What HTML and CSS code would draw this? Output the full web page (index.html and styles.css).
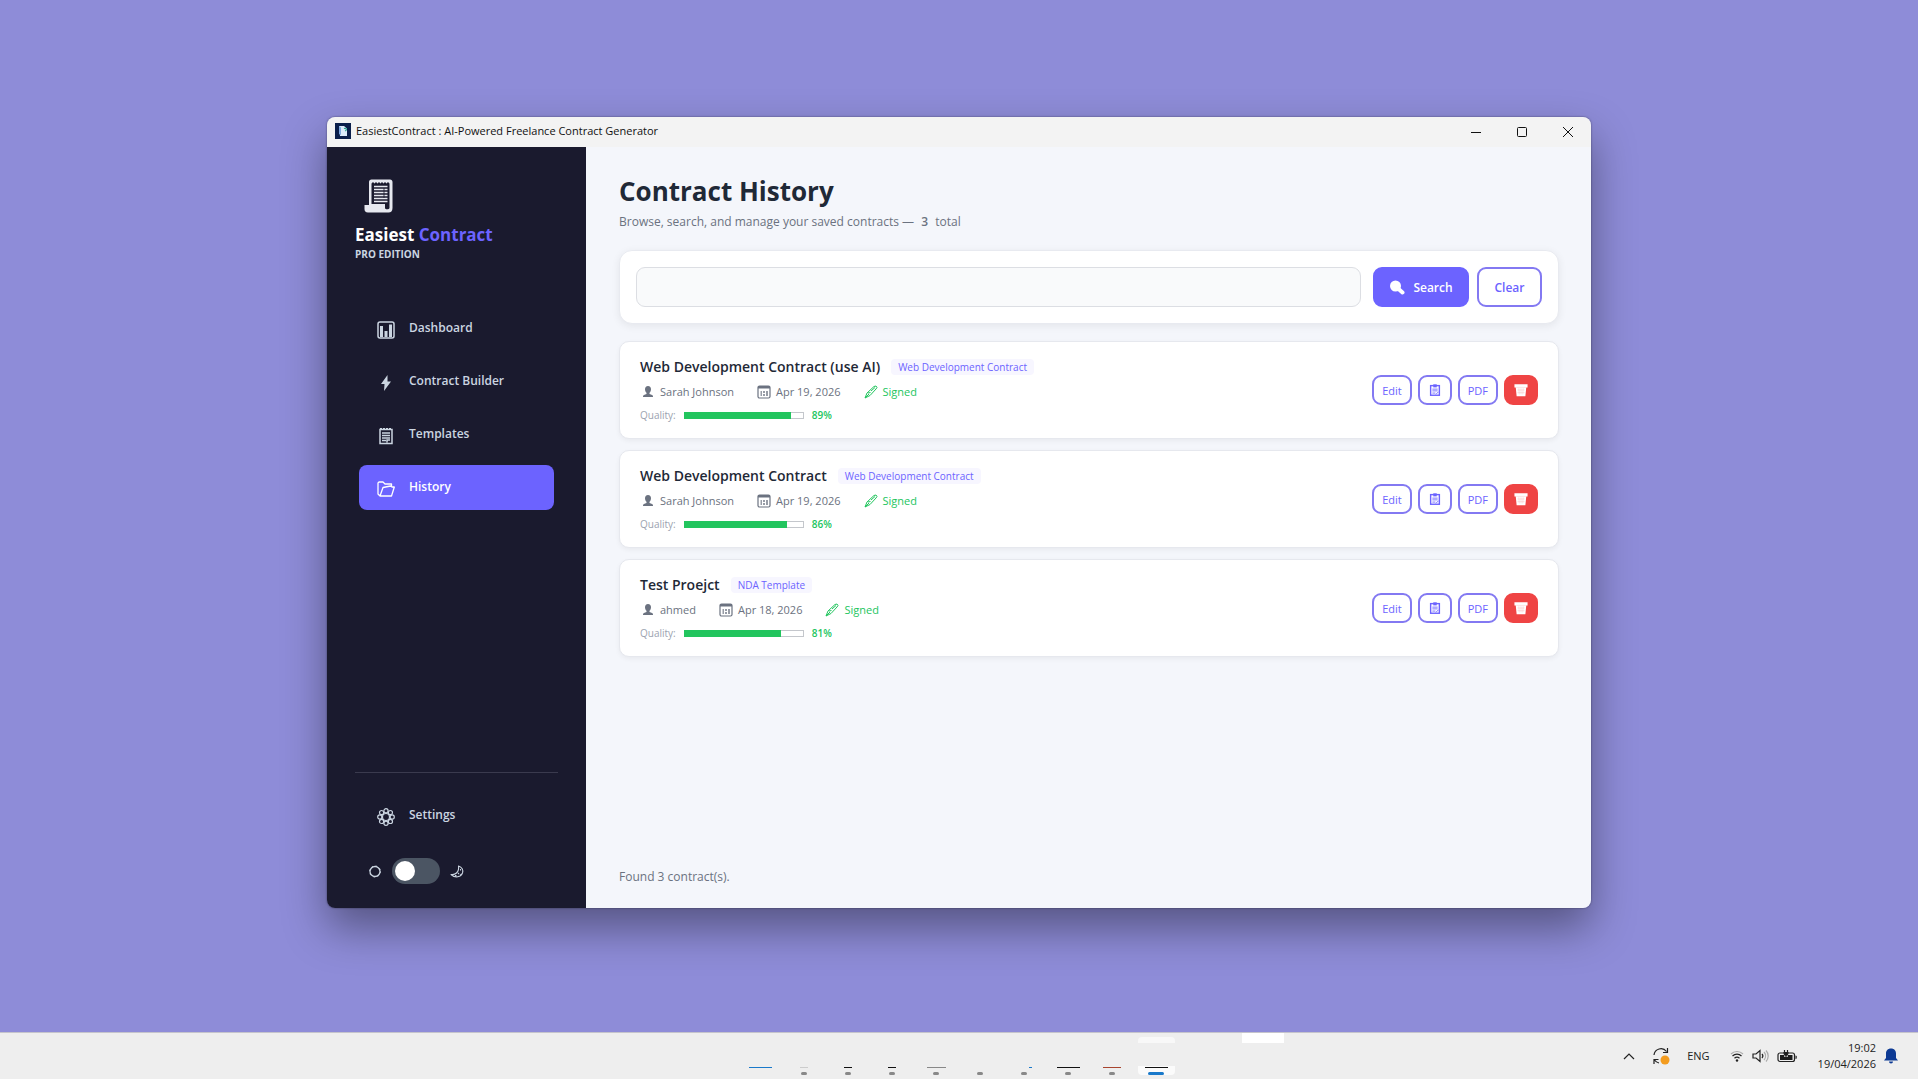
FILE: index.html
```html
<!DOCTYPE html>
<html lang="en">
<head>
    <meta charset="UTF-8">
    <meta name="viewport" content="width=device-width, initial-scale=1.0">
    <title>EasiestContract</title>
    <link rel="stylesheet" href="styles.css">
</head>
<body>
    <!-- shared icons -->
    <svg class="sprite" aria-hidden="true">
        <symbol id="i-user" viewBox="0 0 16 16">
            <path fill="currentColor" d="M8 2c2 0 3 1.300 3 3.200 0 1.600-.6 2.800-1.500 3.500v1.200c2 .5 3.500 1 3.500 2.600V13H3v-.5c0-1.600 1.500-2.100 3.500-2.600V8.700C5.600 8 5 6.800 5 5.200 5 3.300 6 2 8 2z"/>
        </symbol>
        <symbol id="i-calendar" viewBox="0 0 16 16">
            <rect x="2" y="2" width="12" height="12" rx="1.500" fill="none" stroke="currentColor" stroke-width="1.200"/>
            <path fill="currentColor" d="M2 2h12v2.500H2z"/>
            <path fill="currentColor" opacity=".7" d="M4.500 7H6v5H4.500zM7 7h2v2H7zM7 10h2v2H7zM10 7h2v5h-2z"/>
        </symbol>
        <symbol id="i-pen" viewBox="0 0 16 16">
            <path fill="none" stroke="currentColor" stroke-linejoin="round" d="M2 14l2-5L11 2.500l2-.5 1 1.500-1 1.500-6 6.500zM2 14l4-4M5 9l2.500-.5M8 7l4-3.500"/>
        </symbol>
        <symbol id="i-clipboard" viewBox="0 0 16 16">
            <rect x="3" y="3" width="10" height="11" fill="none" stroke="currentColor" stroke-width="1.600"/>
            <path fill="currentColor" d="M6 1.500h4V5H6z"/>
            <path fill="none" stroke="currentColor" d="M5 7h6M5 9h6M5 11.500h3.500M9 13l3-3"/>
        </symbol>
        <symbol id="i-trash" viewBox="0 0 16 16">
            <path fill="#fff" d="M.5 1.500h15V5H14l-1 10H3L2 5H.5z"/>
            <path fill="none" stroke="#fbc5c5" stroke-width=".6" d="M2.500 5h11M5.500 6l.5 7M8 6v7M10.500 6l-.5 7M4 8h8M4 11h8"/>
        </symbol>
    </svg>

    <div class="desktop">
        <div class="window">
            <header class="titlebar">
                <svg class="app-icon" viewBox="0 0 16 16">
                    <rect width="16" height="16" fill="#0b1f4b"/>
                    <path fill="#dcebfa" d="M4 3h5l3 2.500V13H5z"/>
                    <path fill="none" stroke="#2fa58f" stroke-width="1.200" d="M9 5.500c3-1 3 2 1 2.500"/>
                    <path fill="#7fa8e0" d="M4 3l2 1.500V12L4 11z"/>
                </svg>
                <span class="window-title">EasiestContract : AI-Powered Freelance Contract Generator</span>
                <div class="window-controls">
                    <button aria-label="Minimize"><svg viewBox="0 0 12 12"><path d="M1 6.500h10"/></svg></button>
                    <button aria-label="Maximize"><svg viewBox="0 0 12 12"><rect x="1.500" y="1.500" width="9" height="9" rx="1"/></svg></button>
                    <button aria-label="Close"><svg viewBox="0 0 12 12"><path d="M1 1l10 10M11 1L1 11"/></svg></button>
                </div>
            </header>

            <div class="app">
                <aside class="sidebar">
                    <svg class="logo" viewBox="0 0 30 34">
                        <path fill="#e6e8ef" d="M5 3c0-1.500 1-2.500 2.500-2.500H26c1.500 0 2.500 1 2.500 2.500v26c0 3-1.500 4.500-4 4.500H4c-2.500 0-3.500-1.500-3.500-3.500V26H5z"/>
                        <path fill="#1a1a2e" d="M7.500 4.500l1.500-1.500 1.500 1.500L12 3l1.500 1.500L15 3l1.500 1.500L18 3l1.500 1.500L21 3l1.500 1.500L24 3l1.500 1.500V29c0 1.500-4.500 2-4.500 0v-4H7.500z"/>
                        <path fill="none" stroke="#e6e8ef" stroke-width="1.500" d="M10 7.500h13.500M10 10.500h13.500M10 13.500h13.500M10 16.500h13.500M10 19.500h13.500M10 22.500h13.500"/>
                        <path fill="none" stroke="#1a1a2e" stroke-width=".8" d="M20 9v10"/>
                    </svg>
                    <div class="brand">Easiest <span>Contract</span></div>
                    <div class="edition">PRO EDITION</div>

                    <nav class="nav">
                        <a class="nav-item" href="#">
                            <svg viewBox="0 0 18 18"><rect x="1" y="1" width="16" height="16" rx="2" fill="none" stroke="currentColor" stroke-width="1.500"/><path fill="currentColor" d="M3 5h3v11H3zM7.500 10h3v6h-3zM12 3.500h3V16h-3z"/></svg>
                            <span>Dashboard</span>
                        </a>
                        <a class="nav-item" href="#">
                            <svg viewBox="0 0 18 18"><path fill="currentColor" d="M10.500 1L4 10h3.500l-.5 7 7-9.500h-3.500z"/></svg>
                            <span>Contract Builder</span>
                        </a>
                        <a class="nav-item" href="#">
                            <svg viewBox="0 0 18 18"><path fill="none" stroke="currentColor" stroke-width="1.500" d="M3 2.500h12v14H3zM5 6h8M5 8.500h8M5 11h8M5 13.500h4M10 15.500V13h3"/><path fill="none" stroke="currentColor" stroke-width="2" stroke-dasharray="2 1" d="M3 2h12"/></svg>
                            <span>Templates</span>
                        </a>
                        <a class="nav-item active" href="#">
                            <svg viewBox="0 0 18 18"><path fill="none" stroke="currentColor" stroke-width="1.300" stroke-linejoin="round" d="M3 16L1 14V3l1-1h4l2 2h6.500v3M3 16h11.500L17.300 7H15l-1.500-1L6 7.500z"/></svg>
                            <span>History</span>
                        </a>
                    </nav>

                    <div class="sidebar-bottom">
                        <a class="nav-item" href="#">
                            <svg viewBox="0 0 18 18"><g fill="none" stroke="currentColor" stroke-width="1.200"><circle cx="9" cy="9" r="3.500"/><circle cx="9" cy="2.800" r="2.100"/><circle cx="13.400" cy="4.600" r="2.100"/><circle cx="15.200" cy="9" r="2.100"/><circle cx="13.400" cy="13.400" r="2.100"/><circle cx="9" cy="15.200" r="2.100"/><circle cx="4.600" cy="13.400" r="2.100"/><circle cx="2.800" cy="9" r="2.100"/><circle cx="4.600" cy="4.600" r="2.100"/></g></svg>
                            <span>Settings</span>
                        </a>
                        <label class="theme">
                            <svg viewBox="0 0 14 14"><circle cx="7" cy="7.500" r="5" fill="none" stroke="currentColor" stroke-width="1.300"/><circle cx="7" cy="7.500" r="5.500" fill="none" stroke="currentColor" stroke-width="1" stroke-dasharray="1.500 2.820"/></svg>
                            <input type="checkbox" class="switch" aria-label="Dark mode">
                            <svg viewBox="0 0 14 14"><path fill="none" stroke="currentColor" stroke-width="1.100" stroke-linejoin="round" d="M8.500 2c3.500 1 5 4 4 7-1.500 4-7 5.500-11.500 1.500 2 .3 4 0 5.500-1.500C8 7.500 9 5 8.500 2zM8 10l1-1M10.500 5v1.500M5 11.500h1.500M10 11.500l1-1"/></svg>
                        </label>
                    </div>
                </aside>

                <main class="main">
                    <h1>Contract History</h1>
                    <p class="subtitle">Browse, search, and manage your saved contracts — <b>3</b> total</p>

                    <form class="search-card">
                        <input type="text" class="search-input" aria-label="Search contracts">
                        <button type="button" class="btn btn-primary">
                            <svg viewBox="0 0 16 16"><circle cx="6.500" cy="7" r="5.500" fill="currentColor"/><path stroke="currentColor" stroke-width="4" stroke-linecap="round" d="M9 9.500l4.500 4"/></svg>
                            Search
                        </button>
                        <button type="reset" class="btn btn-outline">Clear</button>
                    </form>

                    <div class="contract-list">
                        <article class="contract">
                            <div class="info">
                                <div class="title-row"><h2>Web Development Contract (use AI)</h2><span class="badge">Web Development Contract</span></div>
                                <div class="meta">
                                    <span><svg><use href="#i-user"/></svg>Sarah Johnson</span>
                                    <span><svg><use href="#i-calendar"/></svg>Apr 19, 2026</span>
                                    <span class="signed"><svg><use href="#i-pen"/></svg>Signed</span>
                                </div>
                                <div class="quality">Quality: <div class="bar"><div class="fill" style="width: 89%"></div></div><b>89%</b></div>
                            </div>
                            <div class="actions">
                                <button class="act">Edit</button>
                                <button class="act icon" aria-label="Copy"><svg><use href="#i-clipboard"/></svg></button>
                                <button class="act">PDF</button>
                                <button class="act icon delete" aria-label="Delete"><svg><use href="#i-trash"/></svg></button>
                            </div>
                        </article>

                        <article class="contract">
                            <div class="info">
                                <div class="title-row"><h2>Web Development Contract</h2><span class="badge">Web Development Contract</span></div>
                                <div class="meta">
                                    <span><svg><use href="#i-user"/></svg>Sarah Johnson</span>
                                    <span><svg><use href="#i-calendar"/></svg>Apr 19, 2026</span>
                                    <span class="signed"><svg><use href="#i-pen"/></svg>Signed</span>
                                </div>
                                <div class="quality">Quality: <div class="bar"><div class="fill" style="width: 86%"></div></div><b>86%</b></div>
                            </div>
                            <div class="actions">
                                <button class="act">Edit</button>
                                <button class="act icon" aria-label="Copy"><svg><use href="#i-clipboard"/></svg></button>
                                <button class="act">PDF</button>
                                <button class="act icon delete" aria-label="Delete"><svg><use href="#i-trash"/></svg></button>
                            </div>
                        </article>

                        <article class="contract">
                            <div class="info">
                                <div class="title-row"><h2>Test Proejct</h2><span class="badge">NDA Template</span></div>
                                <div class="meta">
                                    <span><svg><use href="#i-user"/></svg>ahmed</span>
                                    <span><svg><use href="#i-calendar"/></svg>Apr 18, 2026</span>
                                    <span class="signed"><svg><use href="#i-pen"/></svg>Signed</span>
                                </div>
                                <div class="quality">Quality: <div class="bar"><div class="fill" style="width: 81%"></div></div><b>81%</b></div>
                            </div>
                            <div class="actions">
                                <button class="act">Edit</button>
                                <button class="act icon" aria-label="Copy"><svg><use href="#i-clipboard"/></svg></button>
                                <button class="act">PDF</button>
                                <button class="act icon delete" aria-label="Delete"><svg><use href="#i-trash"/></svg></button>
                            </div>
                        </article>
                    </div>

                    <p class="status">Found 3 contract(s).</p>
                </main>
            </div>
        </div>
    </div>

    <footer class="taskbar">
        <div class="tasks">
            <div class="task blue"><i></i></div>
            <div class="task faint"><i></i><u></u></div>
            <div class="task short"><i></i><u></u></div>
            <div class="task short"><i></i><u></u></div>
            <div class="task grey"><i></i><u></u></div>
            <div class="task none"><i></i><u></u></div>
            <div class="task tick"><i></i><u></u></div>
            <div class="task"><i></i><u></u></div>
            <div class="task red"><i></i><u></u></div>
            <div class="task current"><i></i><u></u></div>
        </div>
        <div class="task-preview"></div>
        <div class="tray">
            <svg class="chevron" viewBox="0 0 12 12"><path d="M1 9l5-5 5 5"/></svg>
            <svg class="sync" viewBox="0 0 18 18"><path d="M2 8a7 7 0 0 1 12.500-3.500M15.500 1v4.500H11M2 17v-4.500h4.500M2.500 13c1 1.500 2.500 2.600 4.500 3"/><circle cx="13" cy="13" r="4.500" fill="#f39c1f" stroke="none"/></svg>
            <span class="lang">ENG</span>
            <svg class="wifi" viewBox="0 0 14 14"><path stroke="#aaa" d="M1 5a8.500 8.500 0 0 1 12 0"/><path d="M2.500 7a6.500 6.500 0 0 1 9 0M4.500 9.300a3.600 3.600 0 0 1 5 0"/><circle cx="7" cy="11.500" r="1.200" fill="#222" stroke="none"/></svg>
            <svg class="volume" viewBox="0 0 17 14"><path d="M1 5h3l4-3.500v11L4 9H1zM10 5a3 3 0 0 1 0 4"/><path stroke="#aaa" d="M12 3a6 6 0 0 1 0 8M14 1.500a8 8 0 0 1 0 11"/></svg>
            <svg class="battery" viewBox="0 0 20 14"><rect x="1" y="4" width="16.500" height="8.500" rx="2"/><path fill="#1c1c1c" stroke="none" d="M3 6h12.500v5H3zM18.500 6.500l1.200.5v2.500l-1.200.5z"/><path stroke="#eee" stroke-width="3.500" d="M9 1v7"/><path fill="#1c1c1c" d="M9 9V5M7.500 1v2M10.500 1v2M7 3.500h4c0 2-1 3-2 3s-2-1-2-3z"/></svg>
            <div class="clock"><div>19:02</div><div>19/04/2026</div></div>
            <svg class="bell" viewBox="0 0 14 16"><path fill="#0d3a94" stroke="none" d="M7 .5c3.300 0 5 2.300 5 5V10l2 2.500H0L2 10V5.500c0-2.700 1.700-5 5-5zM5 13.500h4a2 2 0 0 1-4 0z"/></svg>
        </div>
    </footer>
</body>
</html>
```
FILE: styles.css
```css
* {
    box-sizing: border-box;
}
body {
    margin: 0;
    min-height: 100vh;
    display: flex;
    flex-direction: column;
    background: #8e8cd8;
    font-family: "Open Sans", "Noto Sans", sans-serif;
    font-size: 12px;
    line-height: 18px;
    color: #6b7280;
}
h1, h2, p {
    margin: 0;
}
button, input {
    font-family: inherit;
    margin: 0;
}
svg {
    flex: none;
}
.sprite {
    display: none;
}
.desktop {
    flex: 1;
    display: flex;
    padding: 117px 327px 124px;
}

/* window */
.window {
    flex: 1;
    display: flex;
    flex-direction: column;
    border-radius: 8px;
    overflow: hidden;
    box-shadow: 0 0 2px rgba(0, 0, 0, 0.5), 0 20px 44px rgba(0, 0, 0, 0.4);
}
.titlebar {
    display: flex;
    align-items: center;
    height: 30px;
    padding: 0 0 2px 8px;
    gap: 5px;
    background: #f3f3f3;
    color: #111;
    font-size: 11px;
}
.app-icon {
    width: 16px;
    height: 16px;
}
.window-controls {
    display: flex;
    margin-left: auto;
}
.window-controls button {
    width: 46px;
    height: 28px;
    padding: 0;
    border: none;
    background: none;
}
.window-controls svg {
    width: 12px;
    height: 12px;
    vertical-align: middle;
    fill: none;
    stroke: #111;
}
.app {
    flex: 1;
    display: flex;
}

/* sidebar */
.sidebar {
    width: 259px;
    padding: 32px 28px 24px;
    display: flex;
    flex-direction: column;
    background: #1a1a2e;
    color: #cbd5e1;
}
.logo {
    width: 30px;
    height: 34px;
    margin-left: 9px;
}
.brand {
    margin-top: 10px;
    font-size: 17px;
    line-height: 24px;
    font-weight: 700;
    color: #fff;
}
.brand span {
    color: #6c63ff;
}
.edition {
    font-size: 10px;
    line-height: 15px;
    font-weight: 700;
}
.nav {
    display: flex;
    flex-direction: column;
    gap: 8px;
    margin-top: 44px;
    padding: 0 4px;
}
.nav-item {
    display: flex;
    align-items: center;
    gap: 14px;
    height: 45px;
    padding: 3px 18px 0;
    border-radius: 8px;
    color: #cbd5e1;
    font-weight: 600;
    text-decoration: none;
}
.nav-item svg {
    width: 18px;
    height: 18px;
}
.nav-item span {
    padding-bottom: 4px;
}
.nav-item.active {
    background: #6c63ff;
    color: #fff;
}
.sidebar-bottom {
    margin-top: auto;
    padding: 20px 4px 0;
    border-top: 1px solid #3a3a4e;
}
.theme {
    display: flex;
    align-items: center;
    gap: 10px;
    margin-top: 20px;
    padding-left: 9px;
}
.theme svg {
    width: 14px;
    height: 14px;
}
.switch {
    appearance: none;
    width: 48px;
    height: 26px;
    padding: 3px;
    border-radius: 13px;
    background: #4b5563;
}
.switch::before {
    content: "";
    display: block;
    width: 20px;
    height: 20px;
    border-radius: 50%;
    background: #fff;
}
.switch:checked::before {
    margin-left: auto;
}

/* content */
.main {
    flex: 1;
    display: flex;
    flex-direction: column;
    padding: 26px 32px 22px 33px;
    background: #f4f6fb;
}
h1 {
    font-size: 26px;
    line-height: 36px;
    font-weight: 700;
    color: #1f2937;
}
.subtitle {
    margin-top: 4px;
}
.subtitle b {
    margin: 0 4px;
    font-weight: 600;
}
.search-card {
    display: flex;
    margin: 19px 0 17px;
    padding: 16px;
    border: 1px solid #e8eaf0;
    border-radius: 13px;
    background: #fff;
    box-shadow: 0 2px 8px rgba(0, 0, 0, 0.07);
}
.search-input {
    flex: 1;
    height: 40px;
    margin-right: 12px;
    padding: 0 14px;
    border: 1px solid #dcdee3;
    border-radius: 9px;
    background: #f9fafb;
}
.btn {
    display: flex;
    align-items: center;
    justify-content: center;
    height: 40px;
    border: 2px solid #6c63ff;
    border-radius: 9px;
    font-size: 12px;
    font-weight: 600;
}
.btn-primary {
    gap: 8px;
    width: 96px;
    margin-right: 8px;
    background: #6c63ff;
    color: #fff;
}
.btn-primary svg {
    width: 16px;
    height: 16px;
}
.btn-outline {
    width: 65px;
    border-color: #8379f2;
    background: #fff;
    color: #6c63ff;
}

/* contract cards */
.contract-list {
    display: flex;
    flex-direction: column;
    gap: 11px;
}
.contract {
    display: flex;
    align-items: center;
    justify-content: space-between;
    padding: 14px 20px;
    border: 1px solid #e6e8ee;
    border-radius: 10px;
    background: #fff;
    box-shadow: 0 2px 5px rgba(0, 0, 0, 0.05);
}
.info {
    display: flex;
    flex-direction: column;
    gap: 5px;
}
.title-row {
    display: flex;
    align-items: center;
    gap: 11px;
}
h2 {
    font-size: 14px;
    line-height: 22px;
    font-weight: 600;
    color: #1f2937;
}
.badge {
    padding: 0 7px;
    border-radius: 4px;
    background: #f7f6ff;
    color: #6c63ff;
    font-size: 10px;
    line-height: 16px;
    font-weight: 500;
}
.meta {
    display: flex;
    gap: 22px;
    font-size: 11px;
}
.meta span {
    display: flex;
    align-items: center;
    gap: 4px;
}
.meta svg {
    width: 16px;
    height: 16px;
}
.meta .signed {
    color: #22c55e;
}
.quality {
    display: flex;
    align-items: center;
    gap: 8px;
    font-size: 10px;
    color: #9ca3af;
}
.bar {
    width: 120px;
    height: 7px;
    border: 1px solid #c4c7cc;
    background: #fff;
}
.fill {
    height: 5px;
    background: #22c55e;
    outline: 1px solid #22c55e;
}
.quality b {
    color: #22c55e;
    font-weight: 600;
}
.actions {
    display: flex;
    gap: 6px;
}
.act {
    display: flex;
    align-items: center;
    justify-content: center;
    height: 30px;
    padding: 0 8px;
    border: 2px solid #8379f2;
    border-radius: 9px;
    background: #fff;
    color: #6c63ff;
    font-size: 11px;
    font-weight: 500;
}
.act.icon {
    width: 34px;
    padding: 0;
}
.act svg {
    width: 14px;
    height: 14px;
}
.act.delete {
    border-color: #ef4444;
    background: #ef4444;
}
.status {
    margin-top: auto;
}

/* taskbar */
.taskbar {
    display: flex;
    height: 47px;
    padding-left: 38.5%;
    border-top: 1px solid #c5c4cc;
    background: #eeeeee;
    color: #222;
}
.tasks {
    display: grid;
    grid-template-columns: repeat(10, 44px);
}
.task {
    display: flex;
    flex-direction: column;
    align-items: center;
    padding-top: 34px;
    gap: 4px;
}
.task i {
    width: 23px;
    height: 1px;
    background: #111;
}
.task u {
    width: 6px;
    height: 3px;
    border-radius: 2px;
    background: #888;
}
.task.blue i {
    background: #1979ca;
}
.task.faint i {
    width: 8px;
    background: #ccc;
}
.task.short i {
    width: 8px;
}
.task.grey i {
    width: 19px;
    background: #888;
}
.task.none i {
    background: none;
}
.task.tick i {
    width: 3px;
    margin-left: 12px;
    background: #1979ca;
}
.task.red i {
    width: 18px;
    background: #a8452f;
}
.task.current {
    width: 37px;
    height: 38px;
    margin-top: 4px;
    padding-top: 30px;
    justify-self: center;
    border-radius: 4px;
    background: linear-gradient(#f8f8f8 6px, #eeeeee 6px, #eeeeee 29px, #fbfbfb 29px);
}
.task.current u {
    width: 16px;
    background: #1979ca;
}
.task-preview {
    width: 42px;
    height: 10px;
    margin-left: 64px;
    background: #fff;
}
.tray {
    display: flex;
    align-items: center;
    margin-left: auto;
    padding-right: 20px;
    font-size: 11px;
}
.tray svg {
    fill: none;
    stroke: #222;
    stroke-width: 1.2;
}
.chevron {
    width: 12px;
    height: 12px;
    margin-right: 17px;
}
.sync {
    width: 18px;
    height: 18px;
    margin-right: 17px;
}
.lang {
    margin-right: 20px;
}
.wifi {
    width: 14px;
    height: 14px;
    margin-right: 8px;
}
.volume {
    width: 17px;
    height: 14px;
    margin-right: 8px;
}
.battery {
    width: 20px;
    height: 14px;
    margin-right: 21px;
}
.clock {
    line-height: 16px;
    text-align: right;
    margin-right: 8px;
}
.bell {
    width: 14px;
    height: 16px;
}
```
